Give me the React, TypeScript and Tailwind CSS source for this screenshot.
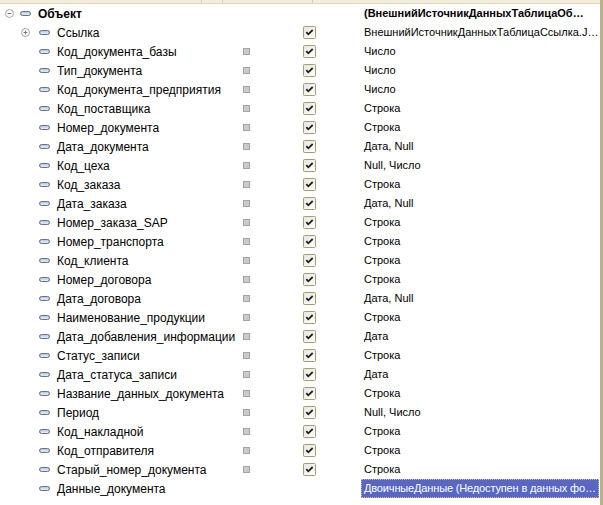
import React from 'react';

type Row = {
  name: string;
  type: string;
  level: 0 | 1;
  toggle?: 'minus' | 'plus';
  gray?: boolean;
  check?: boolean;
  bold?: boolean;
  selected?: boolean;
};

const rows: Row[] = [
  { name: 'Объект', type: '(ВнешнийИсточникДанныхТаблицаОб…', level: 0, toggle: 'minus', bold: true },
  { name: 'Ссылка', type: 'ВнешнийИсточникДанныхТаблицаСсылка.J…', level: 1, toggle: 'plus', check: true },
  { name: 'Код_документа_базы', type: 'Число', level: 1, gray: true, check: true },
  { name: 'Тип_документа', type: 'Число', level: 1, gray: true, check: true },
  { name: 'Код_документа_предприятия', type: 'Число', level: 1, gray: true, check: true },
  { name: 'Код_поставщика', type: 'Строка', level: 1, gray: true, check: true },
  { name: 'Номер_документа', type: 'Строка', level: 1, gray: true, check: true },
  { name: 'Дата_документа', type: 'Дата, Null', level: 1, gray: true, check: true },
  { name: 'Код_цеха', type: 'Null, Число', level: 1, gray: true, check: true },
  { name: 'Код_заказа', type: 'Строка', level: 1, gray: true, check: true },
  { name: 'Дата_заказа', type: 'Дата, Null', level: 1, gray: true, check: true },
  { name: 'Номер_заказа_SAP', type: 'Строка', level: 1, gray: true, check: true },
  { name: 'Номер_транспорта', type: 'Строка', level: 1, gray: true, check: true },
  { name: 'Код_клиента', type: 'Строка', level: 1, gray: true, check: true },
  { name: 'Номер_договора', type: 'Строка', level: 1, gray: true, check: true },
  { name: 'Дата_договора', type: 'Дата, Null', level: 1, gray: true, check: true },
  { name: 'Наименование_продукции', type: 'Строка', level: 1, gray: true, check: true },
  { name: 'Дата_добавления_информации', type: 'Дата', level: 1, gray: true, check: true },
  { name: 'Статус_записи', type: 'Строка', level: 1, gray: true, check: true },
  { name: 'Дата_статуса_записи', type: 'Дата', level: 1, gray: true, check: true },
  { name: 'Название_данных_документа', type: 'Строка', level: 1, gray: true, check: true },
  { name: 'Период', type: 'Null, Число', level: 1, gray: true, check: true },
  { name: 'Код_накладной', type: 'Строка', level: 1, gray: true, check: true },
  { name: 'Код_отправителя', type: 'Строка', level: 1, gray: true, check: true },
  { name: 'Старый_номер_документа', type: 'Строка', level: 1, gray: true, check: true },
  { name: 'Данные_документа', type: 'ДвоичныеДанные (Недоступен в данных фо…', level: 1, selected: true },
];

function Toggle({ kind }: { kind: 'minus' | 'plus' }) {
  return (
    <svg width="9" height="9" viewBox="0 0 9 9" className="shrink-0">
      <circle cx="4.5" cy="4.5" r="4" fill="#fff" stroke="#a3a3a3" />
      <path d="M2.5 4.5h4" stroke="#7a7a7a" />
      {kind === 'plus' && <path d="M4.5 2.5v4" stroke="#7a7a7a" />}
    </svg>
  );
}

function AttrIcon() {
  return (
    <svg width="11" height="5" viewBox="0 0 11 5" className="shrink-0">
      <rect x="0.5" y="0.5" width="10" height="4" rx="2" fill="#c3d0e4" stroke="#62718d" />
      <path d="M2 3.2h7" stroke="#eef2f8" />
    </svg>
  );
}

function GraySquare() {
  return <div className="w-[7px] h-[7px] border border-[#a4a4a4] bg-[#cbcbcb]" />;
}

function Check() {
  return (
    <svg width="13" height="13" viewBox="0 0 13 13">
      <defs>
        <linearGradient id="cb" x1="0" y1="0" x2="1" y2="1">
          <stop offset="0" stopColor="#e6e4dc" />
          <stop offset="1" stopColor="#ffffff" />
        </linearGradient>
      </defs>
      <rect x="0.5" y="0.5" width="12" height="12" rx="1" fill="url(#cb)" stroke="#a69c72" />
      <path d="M3.3 6.1 5.3 8.3 9.7 4" fill="none" stroke="#1f1f1f" strokeWidth="1.8" />
    </svg>
  );
}

export default function App() {
  return (
    <div
      className="w-[603px] h-[505px] bg-white overflow-hidden flex text-[12px] text-black"
      style={{ fontFamily: '"Liberation Sans", Arial, sans-serif' }}
    >
      <div className="flex-1 flex flex-col">
        {/* header strip */}
        <div className="h-[4px] flex bg-[#f3eed9] border-b border-[#dcd5b8]">
          <div className="w-[202px] border-r border-[#d6cfb2]" />
          <div className="w-[21px] border-r border-[#d6cfb2]" />
          <div className="w-[90px] border-r border-[#d6cfb2]" />
          <div className="flex-1" />
        </div>

        <div className="flex flex-col">
          {rows.map((r) => (
            <div key={r.name} className="h-[19px] flex items-center">
              <div className={`w-[240px] flex items-center ${r.level === 0 ? 'pl-[5px]' : 'pl-[21px]'}`}>
                <div className="w-[9px] flex items-center">{r.toggle && <Toggle kind={r.toggle} />}</div>
                <div className={r.level === 0 ? 'ml-[6px]' : 'ml-[9px]'}>
                  <AttrIcon />
                </div>
                <span className={`ml-[7px] whitespace-nowrap ${r.bold ? 'font-bold' : ''}`}>{r.name}</span>
              </div>
              <div className="w-[63px] pl-[3px] flex items-center">{r.gray && <GraySquare />}</div>
              <div className="w-[58px] flex items-center">{r.check && <Check />}</div>
              <div
                className={`w-[238px] h-[19px] flex items-center whitespace-nowrap overflow-hidden text-[11px] ${
                  r.bold ? 'font-bold' : ''
                } ${
                  r.selected
                    ? 'bg-[#5867c6] text-white border border-dotted border-[#c9bf85] pl-[2px] tracking-[-0.15px]'
                    : 'pl-[3px]'
                }`}
              >
                {r.type}
              </div>
            </div>
          ))}
        </div>
      </div>
      <div className="w-[3px] bg-[#b9b08e]" />
    </div>
  );
}
